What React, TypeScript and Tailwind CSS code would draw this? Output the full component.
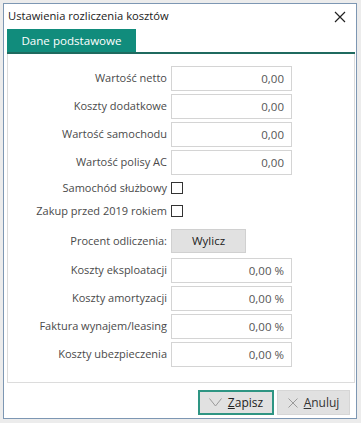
import React from "react";

const font = { fontFamily: '"Open Sans", "Noto Sans", Arial, sans-serif' };

function Input({ value }: { value: string }) {
  return (
    <div className="w-[121px] h-[25px] border border-[#d4d4d4] bg-white flex items-center justify-end pr-[7px] text-[11.5px] text-[#555]">
      {value}
    </div>
  );
}

function Row({ label, children, className }: { label: string; children: React.ReactNode; className?: string }) {
  return (
    <div className={"flex items-center " + (className ?? "")}>
      <div className="w-[163px] pr-[4px] text-right text-[11px] text-[#4a4a4a] whitespace-nowrap">{label}</div>
      {children}
    </div>
  );
}

function Checkbox() {
  return <div className="w-[12px] h-[12px] border border-[#333] bg-white" />;
}

export default function App() {
  return (
    <div className="w-[361px] h-[423px] bg-[#ececec] pt-[3px] pl-[3px]" style={font}>
      <div className="w-[354px] h-[416px] bg-white border border-[#7d97b3] flex flex-col">
        <div className="h-[25px] flex items-center justify-between pl-[4px] pr-[10px]">
          <span className="text-[11.2px] text-[#1a1a1a]">Ustawienia rozliczenia kosztów</span>
          <svg width="12" height="12" viewBox="0 0 12 12">
            <path d="M1 1 L11 11 M11 1 L1 11" stroke="#222" strokeWidth="1.2" fill="none" />
          </svg>
        </div>
        <div className="pl-[3px] pr-[1px]">
          <div className="w-[129px] h-[23px] bg-[#118c7c] flex items-center justify-center text-white text-[11.6px]">
            Dane podstawowe
          </div>
          <div className="h-[2px] bg-[#1f6a5f]" />
        </div>
        <div className="mx-[3px] mr-[1px] border-l border-r border-b border-[#dcdcdc] pt-[12px] pb-[15px] flex flex-col">
          <Row label="Wartość netto"><Input value="0,00" /></Row>
          <Row label="Koszty dodatkowe" className="mt-[3px]"><Input value="0,00" /></Row>
          <Row label="Wartość samochodu" className="mt-[3px]"><Input value="0,00" /></Row>
          <Row label="Wartość polisy AC" className="mt-[3px]"><Input value="0,00" /></Row>
          <Row label="Samochód służbowy" className="mt-[5px] h-[16px]"><Checkbox /></Row>
          <Row label="Zakup przed 2019 rokiem" className="mt-[7px] h-[16px]"><Checkbox /></Row>
          <Row label="Procent odliczenia:" className="mt-[10px]">
            <div className="w-[75px] h-[24px] bg-[#e1e1e1] border border-[#d0d0d0] flex items-center justify-center text-[11.5px] text-[#222]">
              Wylicz
            </div>
          </Row>
          <Row label="Koszty eksploatacji" className="mt-[5px]"><Input value="0,00 %" /></Row>
          <Row label="Koszty amortyzacji" className="mt-[3px]"><Input value="0,00 %" /></Row>
          <Row label="Faktura wynajem/leasing" className="mt-[3px]"><Input value="0,00 %" /></Row>
          <Row label="Koszty ubezpieczenia" className="mt-[3px]"><Input value="0,00 %" /></Row>
        </div>
        <div className="flex justify-end gap-[3px] pr-[6px] mt-[7px]">
          <div className="w-[76px] h-[25px] bg-[#e1e1e1] border-2 border-[#2e9583] flex items-center justify-center gap-[6px] text-[12px] text-[#222]">
            <svg width="13" height="9" viewBox="0 0 13 9">
              <path d="M0.5 0.5 L6.5 8 L12.5 0.5" stroke="#9a9a9a" strokeWidth="1" fill="none" />
            </svg>
            <span><span className="underline">Z</span>apisz</span>
          </div>
          <div className="w-[73px] h-[25px] bg-[#e1e1e1] border border-[#d6d6d6] flex items-center justify-center gap-[6px] text-[12px] text-[#333]">
            <svg width="10" height="10" viewBox="0 0 10 10">
              <path d="M0.5 0.5 L9.5 9.5 M9.5 0.5 L0.5 9.5" stroke="#9a9a9a" strokeWidth="1" fill="none" />
            </svg>
            <span><span className="underline">A</span>nuluj</span>
          </div>
        </div>
      </div>
    </div>
  );
}
